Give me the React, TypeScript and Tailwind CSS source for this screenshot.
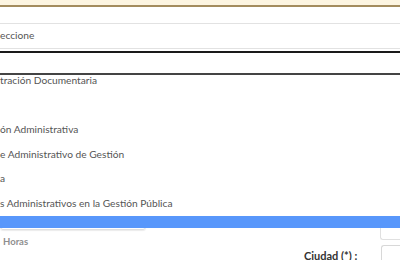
export default function App() {
  const options = [
    "tración Documentaria",
    "",
    "ón Administrativa",
    "e Administrativo de Gestión",
    "a",
    "s Administrativos en la Gestión Pública",
    "",
  ];
  return (
    <div
      className="relative w-[400px] h-[260px] overflow-hidden bg-white"
      style={{ fontFamily: "Lato, 'Noto Sans', sans-serif" }}
    >
      <div className="h-[7px] bg-[#fdf5e1] border-b-2 border-[#a48c5e]" />
      <div className="h-[16px]" />
      <div className="h-[26px] border-y border-[#e2e2e2] flex items-center text-[10.2px] text-[#555]">
        eccione
      </div>

      <div className="mt-[2px] flex items-start">
        <div className="w-[146px] shrink-0 flex flex-col">
          <div className="h-[179px] shrink-0 rounded-[3px] border border-[#e0e0e0] shadow-[0_1px_1px_rgba(0,0,0,0.08)]" />
          <div className="mt-[7px] ml-[3px] text-[9.5px] leading-[10px] font-bold text-[#8f8f8f]">Horas</div>
        </div>
        <div className="flex-1" />
        <div className="w-[96px] shrink-0 flex flex-col items-end">
          <div className="w-[20px] h-[189px] shrink-0 rounded-bl-[3px] border-l border-b border-[#e0e0e0]" />
          <div className="mt-[5px] flex w-full shrink-0">
            <div className="flex-1 pt-[4px] pr-[24px] text-right text-[11px] leading-[14px] font-bold text-[#333] whitespace-nowrap">
              Ciudad (*) :
            </div>
            <div className="w-[20px] h-[30px] shrink-0 rounded-tl-[3px] border-l border-t border-[#d8d8d8]" />
          </div>
        </div>
      </div>

      <div className="absolute left-0 right-0 top-[51px] h-[177px] bg-white flex flex-col">
        <div className="h-[24px] border-t-2 border-b-2 border-t-[#1a1a1a] border-b-[#444]" />
        <div className="h-[153px] overflow-hidden">
          <div className="-mt-[6.25px]">
            {options.map((o, i) => (
              <div
                key={i}
                className={
                  "h-[24.5px] flex items-center text-[10.2px] whitespace-nowrap " +
                  (i === 6 ? "bg-[#5897fb] text-white" : "text-[#555]")
                }
              >
                {o}
              </div>
            ))}
          </div>
        </div>
      </div>
    </div>
  );
}
